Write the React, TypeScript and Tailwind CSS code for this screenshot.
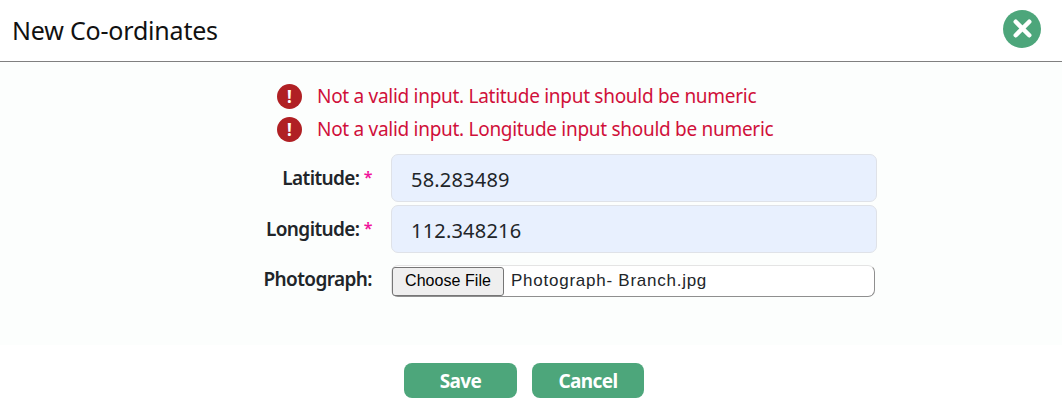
import { X } from 'lucide-react'

const titleFont = "font-['Noto_Sans','Open_Sans',sans-serif]"

function ErrorRow({ text }: { text: string }) {
  return (
    <div className="flex h-[33px] items-center pl-[277px]">
      <span className="flex h-[25px] w-[25px] items-center justify-center rounded-full bg-[#b02024] text-[17px] leading-none font-bold text-white">
        !
      </span>
      <span className="ml-[15px] text-[19px] tracking-[-0.29px] text-[#d0103a]">{text}</span>
    </div>
  )
}

function Field({ label, value }: { label: string; value: string }) {
  return (
    <div className="flex h-[51px] items-center">
      <label className="w-[372px] pt-[1px] text-right text-[19px] font-semibold tracking-[-0.6px] text-[#212529]">
        {label} <span className="relative -top-[2px] text-[16px] text-[#f0149b]">*</span>
      </label>
      <input
        readOnly
        value={value}
        className="ml-[19px] h-[48px] w-[486px] rounded-[7px] border border-[#dfe2e8] bg-[#e8f0fe] pt-[3px] pl-[19px] text-[20px] tracking-[0.2px] text-[#212529] outline-none"
      />
    </div>
  )
}

export default function App() {
  return (
    <div className={`flex h-[407px] w-[1062px] flex-col overflow-hidden bg-white ${titleFont}`}>
      <div className="flex h-[62px] shrink-0 items-center justify-between border-b border-[#808080] pr-[21px] pl-[12px]">
        <h1 className="text-[25px] tracking-[-0.2px] text-[#111]">New Co-ordinates</h1>
        <button
          type="button"
          aria-label="Close"
          className="mb-[4px] flex h-[38px] w-[38px] items-center justify-center rounded-full bg-[#4da67b] text-white"
        >
          <X className="h-[27px] w-[27px]" strokeWidth={4} />
        </button>
      </div>

      <div className="h-[283px] shrink-0 bg-[#fcfefd] pt-[18px]">
        <ErrorRow text="Not a valid input. Latitude input should be numeric" />
        <ErrorRow text="Not a valid input. Longitude input should be numeric" />
        <div className="mt-[6px]">
          <Field label="Latitude:" value="58.283489" />
          <Field label="Longitude:" value="112.348216" />
        </div>
        <div className="mt-[11px] flex h-[32px] items-center">
          <label className="-mt-[4px] w-[372px] text-right text-[19px] font-semibold tracking-[-0.6px] text-[#212529]">
            Photograph:
          </label>
          <div className="ml-[19px] flex h-[32px] w-[484px] items-center rounded-[7px] border border-[#e4e4e4] border-r-[#8f8f8f] border-b-[#8f8f8f] bg-white font-['Liberation_Sans',sans-serif]">
            <button
              type="button"
              className="h-[29px] w-[112px] rounded-[3px] border border-[#767676] bg-[#efefef] text-[16px] tracking-[0.05px] text-black"
            >
              Choose File
            </button>
            <span className="ml-[7px] text-[17px] tracking-[0.75px] text-[#212529]">Photograph- Branch.jpg</span>
          </div>
        </div>
      </div>

      <div className="flex justify-center gap-[15px] pt-[18px] pr-[14px]">
        <button
          type="button"
          className="h-[35px] w-[113px] rounded-[8px] bg-[#4da67b] pt-[1px] text-[19px] font-bold tracking-[-0.6px] text-white"
        >
          Save
        </button>
        <button
          type="button"
          className="h-[35px] w-[112px] rounded-[8px] bg-[#4da67b] pt-[1px] text-[19px] font-bold tracking-[-0.6px] text-white"
        >
          Cancel
        </button>
      </div>
    </div>
  )
}
